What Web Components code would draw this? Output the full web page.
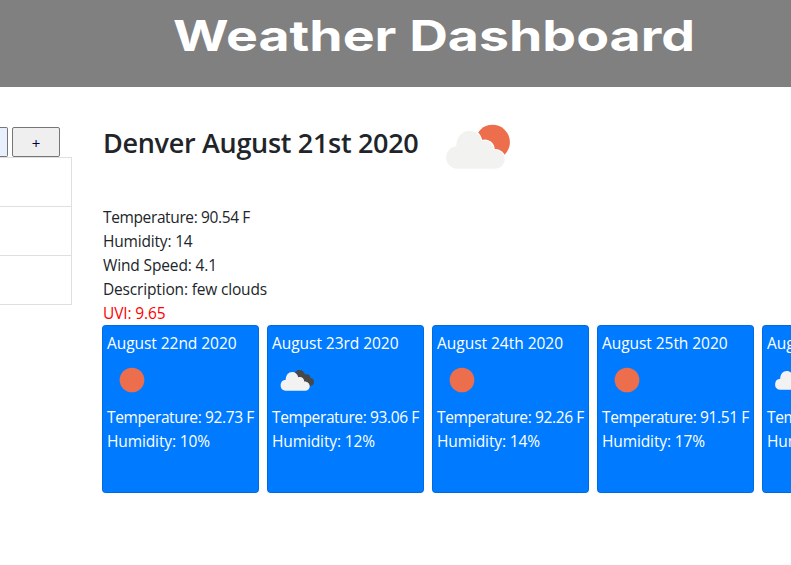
<!DOCTYPE html>
<html lang="en">
<head>
<meta charset="utf-8">
<title>Weather Dashboard</title>
<style>
html,body{margin:0;height:100%;overflow:hidden;background:#fff}
body{font:15.5px/24px "Open Sans","Noto Sans",sans-serif;color:#212529}
</style>
</head>
<body>
<weather-app></weather-app>
<script>
const define = (name, html, setup) => {
  const t = document.createElement('template');
  t.innerHTML = html;
  customElements.define(name, class extends HTMLElement {
    connectedCallback() {
      if (this.shadowRoot) return;
      this.attachShadow({mode: 'open'}).append(t.content.cloneNode(true));
      if (setup) setup(this, this.shadowRoot);
    }
  });
};

// One line of text, tracked (or stretched) to a given width.
define('fit-line', `<style>
:host{display:block;white-space:nowrap}
span{display:inline-block;transform-origin:0 50%}
</style><span><slot></slot></span>`, (el, root) => {
  const s = root.querySelector('span');
  const want = +el.getAttribute('width');
  const have = s.getBoundingClientRect().width;
  if (!want || !have) return;
  if (el.hasAttribute('stretch')) s.style.transform = `scaleX(${want / have})`;
  else s.style.letterSpacing = (want - have) / el.textContent.length + 'px';
});

const cloud = 'M12 38.500a12 12 0 0 1-1-22.500C11 14 12 15 13 15C13 7 18 1.500 25 1.500C31 1.500 35.500 5 37 10.500C43 7 50 10.500 51 18C57 18 60.500 22.500 60.500 28.500C60.500 34.500 56.500 38.500 51 38.500Z';
const front = 'M11.500 43.500A11.200 11.200 0 0 1 12.500 21.300C12.500 12 18 6 25.500 6C31.500 6 36 10 37.500 16.500C43.500 14 49.500 18.500 49.500 25C55.500 24.500 60.500 29 60.500 34.500C60.500 39.500 56.500 43.500 51 43.500Z';
const icons = {
  sun: '<circle cx="50" cy="50" r="24.700" fill="#ec6e4c"/>',
  few: `<g transform="translate(17 25)"><circle cx="48.500" cy="17.200" r="17.400" fill="#ec6e4c"/><path d="${front}" fill="#f2f2f0" stroke="#fff" stroke-width="2.600" paint-order="stroke"/><path d="${front}" fill="#f2f2f0"/></g>`,
  broken: `<g transform="translate(15 28)"><path fill="#484848" d="M28 20C28 7 33 2 40 2C46 2 49 5 51 11C58 9 62 13 62 18C67 18 69 22 69 26C69 31 65 34 60 34L38 35Z"/><path d="${front}" fill="#f2f2f2"/></g>`,
  cloud: `<g transform="translate(14 26)"><path d="${front}" fill="#f2f2f2"/></g>`
};
define('weather-icon', `<style>:host{display:block;width:50px;height:50px}svg{display:block;width:100%;height:100%}</style><svg viewBox="0 0 100 100"></svg>`,
  (el, root) => { root.querySelector('svg').innerHTML = icons[el.getAttribute('kind')]; });

define('page-header', `<style>
:host{display:block;height:87px;box-sizing:border-box;padding:9px 0 0 173px;background:#808080;color:#fff;font:700 42.500px/54px Inter,sans-serif}
</style><fit-line stretch width="522">Weather Dashboard</fit-line>`);

define('search-panel', `<style>
:host{display:block;width:72px;flex:none;padding-top:40px}
.bar{display:flex;gap:4px;height:30px}
.in,button{box-sizing:border-box;height:30px;border:1px solid #767676;border-radius:2px}
.in{width:8px;border-left:0;border-radius:0 2px 2px 0;background:#e8f0fe}
button{width:48px;padding:1px 0 0;background:#efefef;color:#000040;font:15px/24px "Open Sans","Noto Sans",sans-serif}
ul{list-style:none;margin:0;padding:0;border-top:1px solid #dfdfdf}
li{box-sizing:border-box;height:49px;border:solid #dfdfdf;border-width:0 1px 1px 0}
li:last-child{height:49px}
</style><div class="bar"><div class="in"></div><button>+</button></div><ul><li></li><li></li><li></li></ul>`);

define('current-weather', `<style>
:host{display:block;height:238px}
.top{display:flex;height:118px}
.h{width:325px;padding:37px 0 0 1px;box-sizing:border-box;font-size:27px;font-weight:600;line-height:38px}
weather-icon{width:100px;height:100px;margin-top:13px}
.d{padding-left:1px}
.uvi{color:#f00}
</style><div class="top"><div class="h"><fit-line width="315.500">Denver August 21st 2020</fit-line></div><weather-icon kind="few"></weather-icon></div>
<div class="d"><fit-line width="147">Temperature: 90.54 F</fit-line><fit-line width="89.500">Humidity: 14</fit-line><fit-line width="114">Wind Speed: 4.1</fit-line><fit-line width="164">Description: few clouds</fit-line><fit-line class="uvi" width="62.500">UVI: 9.65</fit-line></div>`);

define('day-card', `<style>
:host{display:block;flex:none;width:157px;height:168px;box-sizing:border-box;padding:5px 0 0 4px;background:#007bff;border:1px solid rgba(0,0,0,.125);border-radius:4px;color:#fff}
:host(:first-child){width:156px}
weather-icon{margin:15px 0 1px}
</style><slot></slot>`);

define('forecast-row', `<style>:host{display:flex;gap:8px}</style>`, (el, root) => {
  const days = [
    ['August 22nd 2020', 129.5, 'sun', '92.73', '10%'],
    ['August 23rd 2020', 126.5, 'broken', '93.06', '12%'],
    ['August 24th 2020', 126, 'sun', '92.26', '14%'],
    ['August 25th 2020', 125.5, 'sun', '91.51', '17%'],
    ['August 26th 2020', 126, 'cloud', '90.86', '15%']];
  for (const [date, w, icon, temp, hum] of days) {
    const c = document.createElement('day-card');
    c.innerHTML = `<fit-line width="${w}">${date}</fit-line><weather-icon kind="${icon}"></weather-icon><fit-line width="147">Temperature: ${temp} F</fit-line><fit-line width="103">Humidity: ${hum}</fit-line>`;
    root.append(c);
  }
});

define('weather-app', `<style>
:host{display:block;width:791px;height:565px;overflow:hidden}
main{display:flex;gap:30px}
section{flex:1;min-width:0}
</style><page-header></page-header><main><search-panel></search-panel><section><current-weather></current-weather><forecast-row></forecast-row></section></main>`);
</script>
</body>
</html>
